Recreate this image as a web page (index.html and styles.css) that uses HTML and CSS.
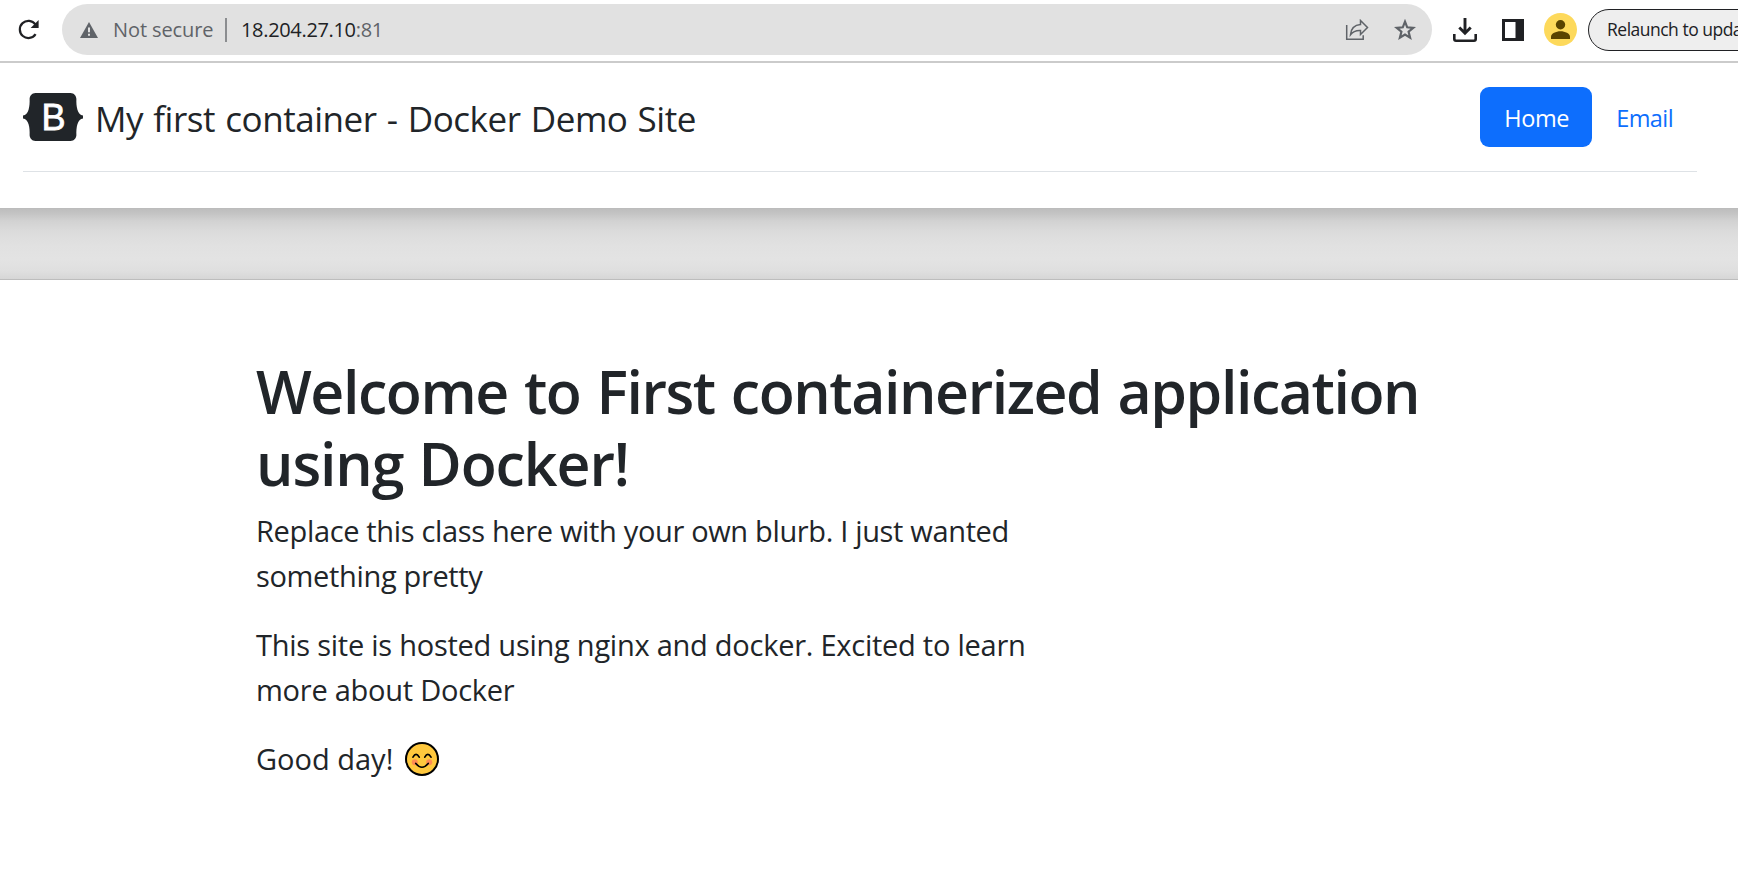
FILE: index.html
```html
<!DOCTYPE html>
<html lang="en">
<head>
<meta charset="utf-8">
<title>My first container - Docker Demo Site</title>
<link rel="stylesheet" href="styles.css">
</head>
<body>
<div class="toolbar">
  <svg class="reload" viewBox="0 0 24 24"><path d="M18.600 16.200A8.600 8.600 0 1 1 18.400 6.400" fill="none" stroke="#202124" stroke-width="2.200"/><path d="M21.600 2v8h-8z" fill="#202124"/></svg>
  <div class="omnibox">
    <svg class="warn" viewBox="0 0 18 16"><path d="M9 0l9 16H0z" fill="#5f6368"/><path d="M8 5.500h2v4.700H8zM8 11.800h2v2H8z" fill="#e1e1e1"/></svg>
    <span class="insecure">Not secure</span>
    <span class="sep"></span>
    <span class="url">18.204.27.10<span class="port">:81</span></span>
    <svg class="share" viewBox="0 0 24 22"><path d="M1.700 6v14.300h16.500v-4" fill="none" stroke="#5f6368" stroke-width="1.500"/><path d="M15.500 1.500l7 7-7 7v-4c-4.500-.2-7.800 1.200-10 4.200C6 10 9 6 15.500 5.500z" fill="none" stroke="#5f6368" stroke-width="1.500"/></svg>
    <svg class="star" viewBox="0 0 22 22"><path d="M11 2.700l2.200 5.600 6.100.5-4.700 3.900 1.500 6-5.100-3.200-5.100 3.200 1.500-6-4.700-3.900 6.100-.5z" fill="none" stroke="#5f6368" stroke-width="2.200"/></svg>
  </div>
  <svg class="download" viewBox="0 0 24 24"><path d="M12 0v15M6.300 9.500L12 15.200l5.700-5.700" fill="none" stroke="#202124" stroke-width="2.900"/><path d="M1.300 16v5q0 1.700 1.700 1.700h18q1.700 0 1.700-1.700v-5" fill="none" stroke="#202124" stroke-width="2.600"/></svg>
  <svg class="panel" viewBox="0 0 22 22"><path d="M1.500 1.500h19v19h-19z" fill="none" stroke="#202124" stroke-width="3"/><path d="M13.500 1H21v20h-7.500z" fill="#202124"/></svg>
  <svg class="avatar" viewBox="0 0 33 33"><circle cx="16.500" cy="16.500" r="16.500" fill="#fdd95b"/><circle cx="16.500" cy="11.700" r="4.700" fill="#594300"/><path d="M7 26v-2.500c0-3 5-5.300 9.500-5.300s9.500 2.300 9.500 5.300V26z" fill="#594300"/></svg>
  <div class="relaunch">Relaunch to update</div>
</div>
<header class="site-header">
  <div class="header-row">
    <div class="brand">
      <svg class="logo" viewBox="0 0 118 94"><path fill="#212529" d="M24.509 0c-6.733 0-11.715 5.893-11.492 12.284.214 6.140-.064 14.092-2.066 20.577C8.943 39.365 5.547 43.485 0 44.014v5.972c5.547.529 8.943 4.649 10.951 11.153 2.002 6.485 2.280 14.437 2.066 20.577C12.794 88.106 17.776 94 24.510 94H93.500c6.733 0 11.714-5.893 11.491-12.284-.214-6.140.064-14.092 2.066-20.577 2.009-6.504 5.396-10.624 10.943-11.153v-5.972c-5.547-.529-8.934-4.649-10.943-11.153-2.002-6.484-2.280-14.437-2.066-20.577C105.214 5.894 100.233 0 93.500 0H24.508z"/><text class="logo-letter" x="60" y="72" text-anchor="middle">B</text></svg>
      <span class="brand-name">My first container - Docker Demo Site</span>
    </div>
    <nav class="nav"><a class="nav-link active">Home</a><a class="nav-link email">Email</a></nav>
  </div>
</header>
<div class="divider"></div>
<main class="hero">
  <h1><span class="wide">Welcome to First containerized application</span><br>using Docker!</h1>
  <p class="blurb">Replace this class here with your own blurb. I just wanted<br>something pretty</p>
  <p class="about">This site is hosted using nginx and docker. Excited to learn<br>more about Docker</p>
  <p class="last">Good day! <svg class="smile" viewBox="0 0 34 34"><circle cx="17" cy="17" r="16" fill="#ffc83d" stroke="#000" stroke-width="2"/><circle cx="9.800" cy="20.200" r="3" fill="#ff8b51"/><circle cx="24.200" cy="20.200" r="3" fill="#ff8b51"/><path d="M8 15.200q3-5.600 6.200 0M19.800 15.200q3-5.600 6.200 0M10.800 21.500q6.200 7.500 12.400 0" fill="none" stroke="#000" stroke-width="1.700" stroke-linecap="round"/></svg></p>
</main>
</body>
</html>
```
FILE: styles.css
```css
* { box-sizing: border-box; }
body { margin: 0; background: #fff; color: #212529; font-family: "Open Sans", "Noto Sans", sans-serif; height: 876px; overflow: hidden; }
svg { display: block; flex: none; }
.toolbar { display: flex; align-items: center; height: 63px; padding: 0 0 2px 17px; border-bottom: 2px solid #cbcbcb; white-space: nowrap; overflow: hidden; }
.reload { width: 24px; height: 24px; margin-right: 21px; }
.omnibox { display: flex; align-items: center; width: 1370px; height: 51px; border-radius: 26px; background: #e1e1e1; padding-left: 18px; font-size: 20px; flex: none; color: #5f6368; }
.warn { width: 18px; height: 16px; margin-top: 1px; }
.insecure { width: 112px; margin-left: 15px; letter-spacing: -.1px; }
.sep { width: 2px; height: 24px; background: #8b8d90; }
.url { margin-left: 14px; color: #202124; letter-spacing: -.33px; }
.port { color: #5f6368; }
.share { width: 24px; height: 22px; margin-left: auto; }
.star { width: 22px; height: 22px; margin: 0 16px 0 25px; }
.download { width: 24px; height: 24px; margin-left: 21px; }
.panel { width: 22px; height: 22px; margin-left: 25px; }
.avatar { width: 33px; height: 33px; margin-left: 20px; }
.relaunch { width: 220px; height: 42px; margin-left: 11px; border: 1.5px solid #202124; border-radius: 21px; background: #eee; padding-left: 18px; font-size: 17.5px; line-height: 38px; flex: none; color: #202124; letter-spacing: -.5px; }
.site-header { height: 145px; padding: 24px 41px 0 23px; }
.header-row { display: flex; justify-content: space-between; height: 85px; border-bottom: 1px solid #dee2e6; }
.brand { display: flex; height: 60px; align-items: center; }
.logo { width: 60px; height: 48px; }
.logo-letter { font-family: "Liberation Sans", sans-serif; font-size: 71px; fill: #fff; stroke: #fff; stroke-width: 1.5px; }
.brand-name { margin-left: 12px; padding-top: 4px; font-size: 35px; letter-spacing: -.45px; word-spacing: 1.5px; line-height: 54px; white-space: nowrap; }
.nav { display: flex; height: 60px; }
.nav-link { padding: 0 24px; border-radius: 9px; font-size: 23.5px; line-height: 62px; color: #0d6efd; }
.active { background: #0d6efd; color: #fff; width: 112px; letter-spacing: -.4px; }
.email { letter-spacing: -.6px; }
.divider { height: 72px; background: linear-gradient(#bebebe, #c3c3c3 4px, #d2d2d2 12px, #dbdbdb 22px, #e1e1e1 36px, #e3e3e3 50px, #dfdfdf 62px, #d6d6d6 70px); border-top: 1px solid #bcbcbc; border-bottom: 1px solid #bdbdbd; }
.hero { padding: 75px 0 0 256px; white-space: nowrap; }
h1 { margin: 0 0 9px; font-size: 59px; line-height: 72px; font-weight: 600; letter-spacing: -1.1px; word-spacing: 1px; }
.wide { letter-spacing: -1.43px; word-spacing: 2.2px; }
p { margin: 0 0 24px; font-size: 29px; line-height: 45px; }
.blurb { letter-spacing: -.34px; }
.about { letter-spacing: -.25px; }
.last { display: flex; align-items: center; }
.smile { width: 34px; height: 34px; margin-left: 12px; }
```
